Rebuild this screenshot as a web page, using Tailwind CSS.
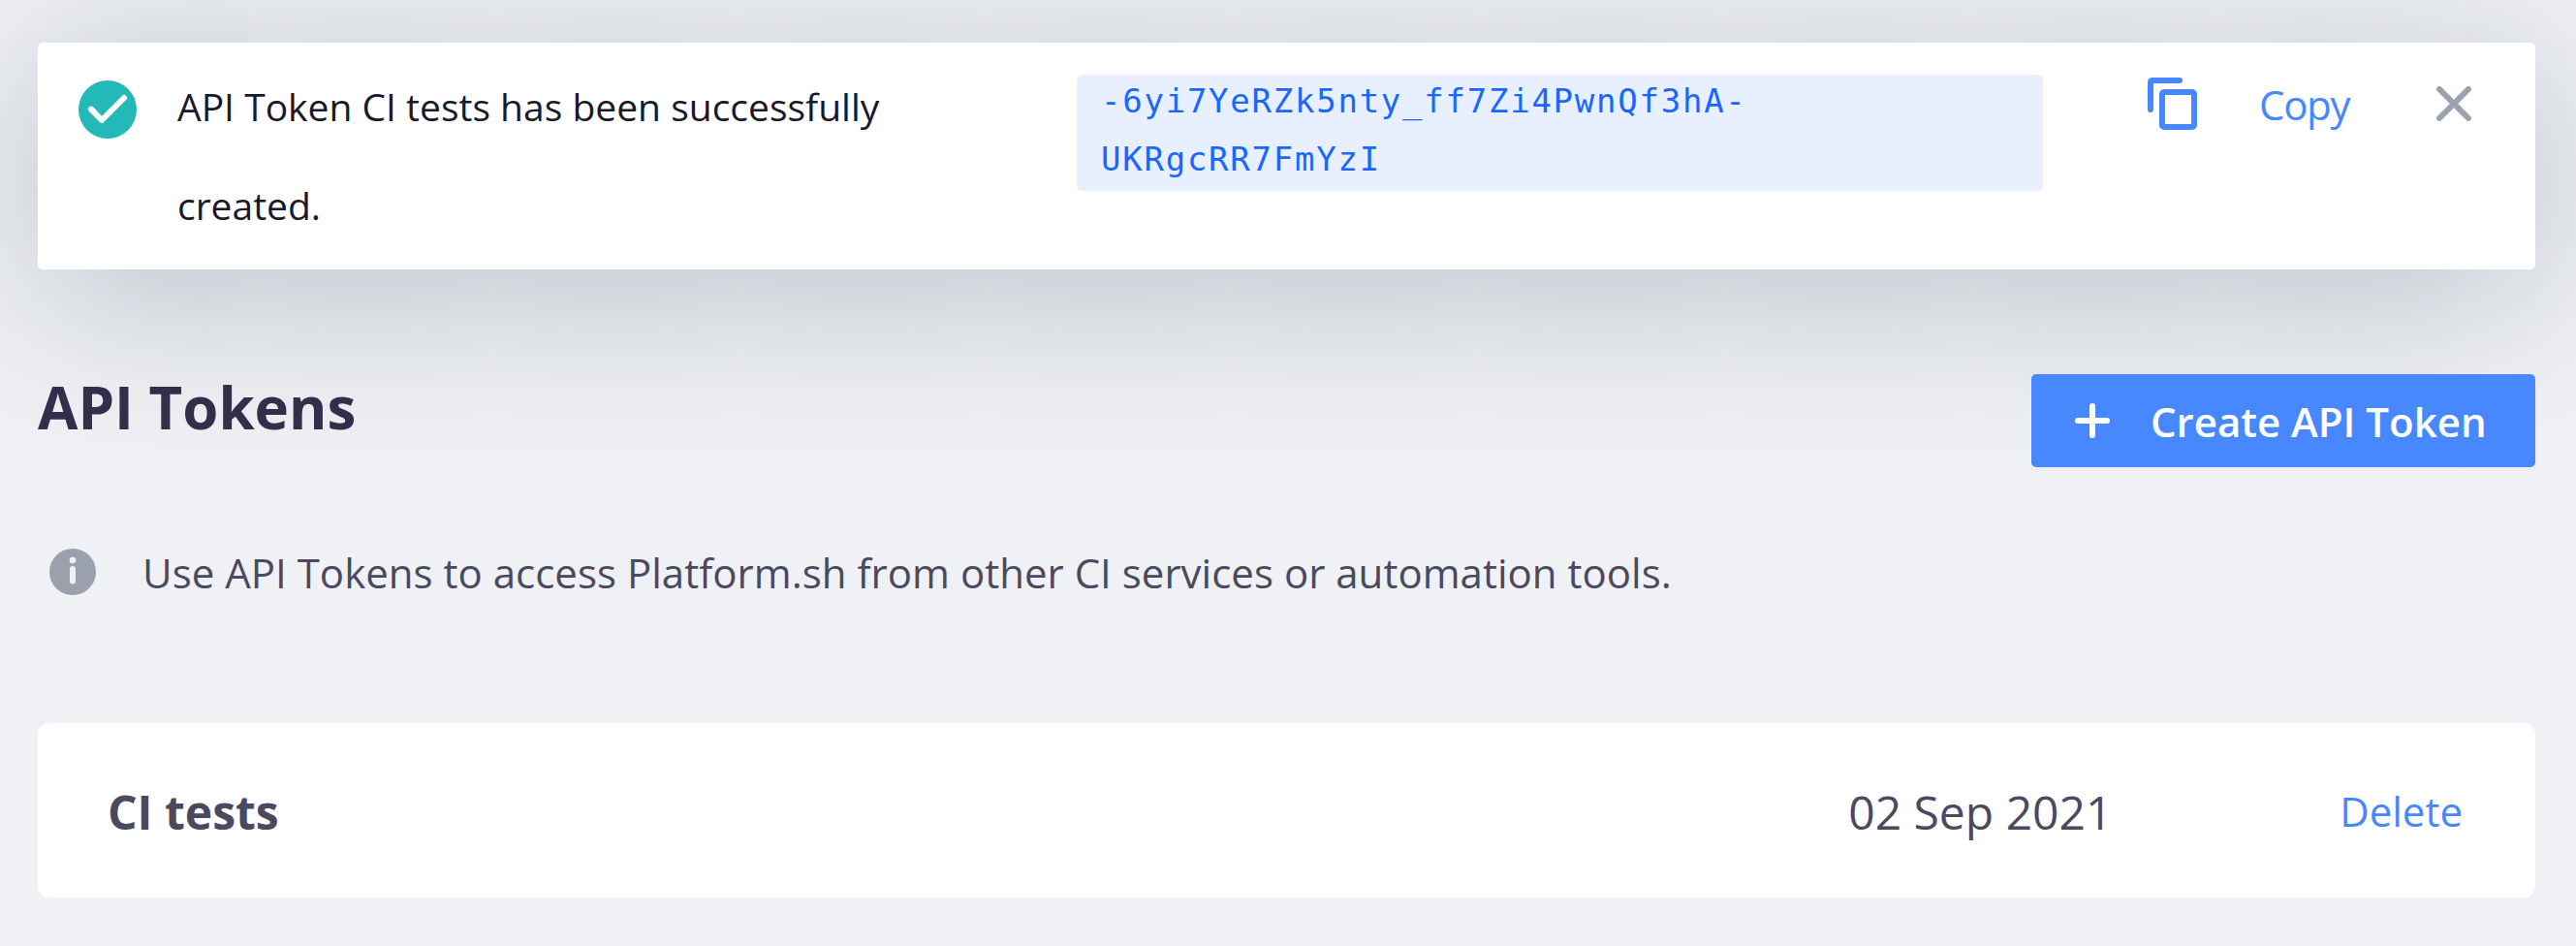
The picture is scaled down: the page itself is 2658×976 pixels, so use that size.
<!DOCTYPE html>
<html lang="en">
<head>
<meta charset="utf-8">
<title>API Tokens</title>
<script src="https://cdn.jsdelivr.net/npm/@tailwindcss/browser@4"></script>
</head>
<body class="bg-[#f0f1f5] font-['Open_Sans',sans-serif]">
<main class="h-[976px] w-[2658px] overflow-hidden pl-[39px] pr-[42px] pt-11">
  <section class="flex h-[234px] items-start rounded-[5px] bg-white pl-[42px] shadow-[0_24px_180px_rgba(12,40,50,0.25)]">
    <svg class="mt-[39px] size-[60px] shrink-0" viewBox="0 0 60 60" fill="none">
      <circle cx="30" cy="30" r="30" fill="#24b8b9"/>
      <path d="M13 29.7 L24 41 L47 18" stroke="#fff" stroke-width="6" stroke-linecap="round" stroke-linejoin="round"/>
    </svg>
    <p class="ml-[42px] mt-[15px] w-[860px] shrink-0 text-[39px] leading-[102px] text-[#1a192b]">API Token CI tests has been successfully created.</p>
    <div class="ml-[68px] mt-[33px] h-[120px] w-[997px] shrink-0 rounded-md bg-[#e8efff] pl-[25px]">
      <code class="-mt-[3px] block font-['DejaVu_Sans_Mono',monospace] text-[34px] leading-[60px] tracking-[1.75px] text-[#1a67ff]">-6yi7YeRZk5nty_ff7Zi4PwnQf3hA-<br>UKRgcRR7FmYzI</code>
    </div>
    <button class="ml-[108px] mt-9 flex items-start text-[#4788ff]">
      <svg class="h-[54px] w-[51px]" viewBox="0 0 51 54" fill="none" stroke="currentColor" stroke-width="6" stroke-linecap="round" stroke-linejoin="round">
        <path d="M3 33 V5 Q3 3 5 3 H33"/>
        <rect x="15" y="15" width="33" height="36" rx="2"/>
      </svg>
      <span class="-mt-px ml-[64px] w-[96px] text-left text-[42px] leading-[57px] tracking-[-1.3px]">Copy</span>
    </button>
    <svg class="ml-[87px] mt-[45px] size-9" viewBox="0 0 36 36" fill="none" stroke="#9aa2ae" stroke-width="6" stroke-linecap="round">
      <path d="M3 3 L33 33 M33 3 L3 33"/>
    </svg>
  </section>

  <header class="mt-[108px] flex items-start justify-between">
    <h1 class="-mt-[7px] text-[60px] font-bold leading-[82px] text-[#312f49]">API Tokens</h1>
    <button class="flex h-24 w-[520px] items-center rounded-[5px] bg-[#4788ff] pl-[45px] text-white">
      <svg class="size-9" viewBox="0 0 36 36" fill="none" stroke="currentColor" stroke-width="6" stroke-linecap="round">
        <path d="M18 3 V33 M3 18 H33"/>
      </svg>
      <span class="ml-[42px] text-[42px] font-semibold leading-[57px]">Create API Token</span>
    </button>
  </header>

  <div class="mt-[81px] flex h-[60px] items-start pl-3">
    <svg class="mt-[3px] size-12" viewBox="0 0 48 48">
      <circle cx="24" cy="24" r="24" fill="#9aa1ad"/>
      <circle cx="24" cy="12" r="3.3" fill="#f0f1f5"/>
      <rect x="21" y="18" width="6" height="18.5" rx="3" fill="#f0f1f5"/>
    </svg>
    <p class="-mt-px ml-12 text-[42px] leading-[57px] tracking-[0.015px] text-[#4b495f]">Use API Tokens to access Platform.sh from other CI services or automation tools.</p>
  </div>

  <section class="mt-[123px] flex h-[180px] items-center rounded-xl bg-white pl-[72px] pr-[75px] text-[#4b495f]">
    <h2 class="mt-[3px] text-[48px] font-bold leading-[66px]">CI tests</h2>
    <time class="ml-auto mt-[3px] w-[507px] text-[48px] leading-[66px]">02 Sep 2021</time>
    <a class="text-[42px] leading-[57px] text-[#4788ff]">Delete</a>
  </section>
</main>
</body>
</html>
